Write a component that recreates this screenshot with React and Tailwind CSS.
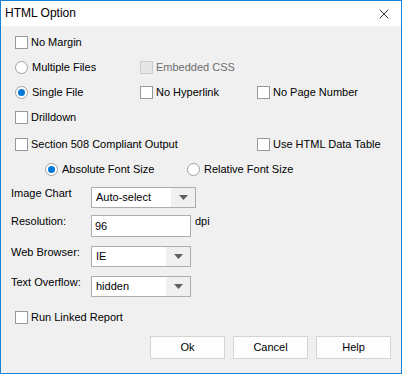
import { X } from 'lucide-react';

const Check = ({ label, disabled, className = '' }) => (
    <div className={`flex items-center ${className}`}>
        <span
            className={`h-[13px] w-[13px] shrink-0 border ${disabled ? 'border-[#cccccc] bg-[#e6e6e6]' : 'border-[#999999] bg-white'}`}
        />
        <span className={`ml-[3px] whitespace-nowrap ${disabled ? 'text-[#6d6d6d]' : 'text-black'}`}>{label}</span>
    </div>
);

const Radio = ({ label, checked, className = '' }) => (
    <div className={`flex items-center ${className}`}>
        <span className="flex h-[13px] w-[13px] shrink-0 items-center justify-center rounded-full border border-[#a0a0a0] bg-white">
            {checked && <span className="h-[7px] w-[7px] rounded-full bg-[#0078d7]" />}
        </span>
        <span className="ml-[4px] whitespace-nowrap text-black">{label}</span>
    </div>
);

const Select = ({ value, width }) => (
    <div className={`flex h-[21px] border border-[#adadad] bg-white ${width}`}>
        <span className="flex-1 pl-[4px] leading-[19px]">{value}</span>
        <span className="flex w-[24px] items-center justify-center bg-[#f0f0f0]">
            <svg width="9" height="5" viewBox="0 0 9 5">
                <path d="M0 0H9L4.5 5Z" fill="#606060" />
            </svg>
        </span>
    </div>
);

const Button = ({ children }) => (
    <button className="h-[23px] w-[75px] border border-[#d4d4d4] bg-[#fdfdfd] text-black">{children}</button>
);

export default function App() {
    return (
        <div
            className="flex h-[374px] w-[402px] flex-col border border-[#1883d7] text-[11px] leading-[15px] text-black"
            style={{ fontFamily: '"Liberation Sans", Arial, sans-serif' }}
        >
            <div className="flex h-[25px] shrink-0 items-center justify-between bg-white pl-[4px] pr-[9px]">
                <span className="text-[12px]">HTML Option</span>
                <X size={16} strokeWidth={1.2} className="text-black" />
            </div>
            <div className="flex flex-1 flex-col bg-[#f0f0f0] pl-[14px] pt-[4px]">
                <div className="flex h-[25px] items-center">
                    <Check label="No Margin" />
                </div>
                <div className="flex h-[25px] items-center">
                    <Radio label="Multiple Files" className="w-[125px]" />
                    <Check label="Embedded CSS" disabled />
                </div>
                <div className="flex h-[25px] items-center">
                    <Radio label="Single File" checked className="w-[125px]" />
                    <Check label="No Hyperlink" className="w-[117px]" />
                    <Check label="No Page Number" />
                </div>
                <div className="flex h-[25px] items-center">
                    <Check label="Drilldown" />
                </div>
                <div className="mt-[2px] flex h-[25px] items-center">
                    <Check label="Section 508 Compliant Output" className="w-[242px]" />
                    <Check label="Use HTML Data Table" />
                </div>
                <div className="flex h-[25px] items-center pl-[30px]">
                    <Radio label="Absolute Font Size" checked className="w-[142px]" />
                    <Radio label="Relative Font Size" />
                </div>

                <div className="-ml-[4px] mt-[4px] flex flex-col">
                    <div className="flex items-start">
                        <span className="w-[80px] whitespace-nowrap">Image Chart</span>
                        <div className="mt-[1px]">
                            <Select value="Auto-select" width="w-[105px]" />
                        </div>
                    </div>
                    <div className="mt-[6px] flex items-start">
                        <span className="w-[80px] whitespace-nowrap">Resolution:</span>
                        <div className="mt-[1px] h-[22px] w-[100px] border border-[#adadad] bg-white pl-[3px] leading-[20px]">
                            96
                        </div>
                        <span className="ml-[4px]">dpi</span>
                    </div>
                    <div className="mt-[8px] flex items-start">
                        <span className="w-[80px] whitespace-nowrap">Web Browser:</span>
                        <div className="mt-[1px]">
                            <Select value="IE" width="w-[100px]" />
                        </div>
                    </div>
                    <div className="mt-[8px] flex items-start">
                        <span className="w-[80px] whitespace-nowrap">Text Overflow:</span>
                        <div className="mt-[1px]">
                            <Select value="hidden" width="w-[100px]" />
                        </div>
                    </div>
                </div>

                <div className="mt-[13px] flex h-[14px] items-center">
                    <Check label="Run Linked Report" />
                </div>
                <div className="mt-[12px] flex justify-end gap-[8px] pr-[10px]">
                    <Button>Ok</Button>
                    <Button>Cancel</Button>
                    <Button>Help</Button>
                </div>
            </div>
        </div>
    );
}
